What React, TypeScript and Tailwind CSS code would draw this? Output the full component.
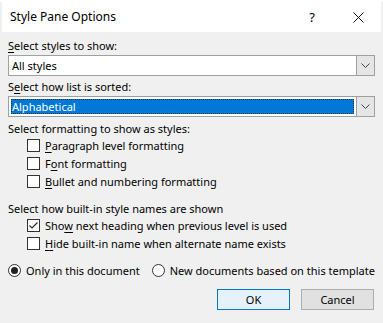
import type { ReactNode } from 'react'

const font = { fontFamily: '"Noto Sans", "Open Sans", Arial, sans-serif' }

function U({ children }: { children: ReactNode }) {
  return <span className="underline underline-offset-2">{children}</span>
}

function Chevron() {
  return (
    <svg width="9" height="5" viewBox="0 0 9 5" fill="none">
      <path d="M0.5 0.5 L4.5 4.5 L8.5 0.5" stroke="#444" strokeWidth="1" />
    </svg>
  )
}

function Check({ checked, children }: { checked?: boolean; children: ReactNode }) {
  return (
    <div className="flex items-center gap-[5px] h-[18px] pl-[19px]">
      <div className="w-[13px] h-[13px] border border-[#333] bg-white flex items-center justify-center">
        {checked && (
          <svg width="11" height="11" viewBox="0 0 11 11" fill="none">
            <path d="M1.5 5.5 L4 8 L9.5 2.5" stroke="#222" strokeWidth="1.1" />
          </svg>
        )}
      </div>
      <span>{children}</span>
    </div>
  )
}

function Radio({ on, children }: { on?: boolean; children: ReactNode }) {
  return (
    <div className="flex items-center gap-[5px]">
      <div className="w-[13px] h-[13px] rounded-full border border-[#333] bg-white flex items-center justify-center">
        {on && <div className="w-[7px] h-[7px] rounded-full bg-[#222]" />}
      </div>
      <span>{children}</span>
    </div>
  )
}

export default function App() {
  return (
    <div className="w-[383px] h-[323px] bg-[#f0f0f0] text-[11px] text-black leading-none whitespace-nowrap" style={font}>
      <div className="mx-[2px] mt-[2px] h-[30px] bg-white flex items-center pl-[8px]">
        <span className="flex-1 text-[12px]">Style Pane Options</span>
        <span className="w-[46px] text-center text-[13px]">?</span>
        <span className="w-[46px] flex justify-center">
          <svg width="11" height="11" viewBox="0 0 11 11">
            <path d="M0.5 0.5 L10.5 10.5 M10.5 0.5 L0.5 10.5" stroke="#111" strokeWidth="1" />
          </svg>
        </span>
      </div>

      <div className="px-[8px] pt-[5px]">
        <div className="h-[16px] flex items-center"><U>S</U>elect styles to show:</div>
        <div className="mt-[2px] h-[21px] border border-[#a0a0a0] bg-white flex">
          <div className="flex-1 flex items-center pl-[3px]">All styles</div>
          <div className="w-[18px] bg-[#e5e5e5] border-l border-[#a0a0a0] flex items-center justify-center">
            <Chevron />
          </div>
        </div>

        <div className="mt-[2px] h-[16px] flex items-center">S<U>e</U>lect how list is sorted:</div>
        <div className="mt-[2px] h-[21px] border border-[#a0a0a0] bg-white flex">
          <div className="flex-1 p-[2px]">
            <div className="h-full bg-[#0078d7] text-white flex items-center pl-[1px] outline outline-1 outline-dotted outline-[#333] -outline-offset-1">
              Alphabetical
            </div>
          </div>
          <div className="w-[18px] bg-[#e5e5e5] border-l border-[#a0a0a0] flex items-center justify-center">
            <Chevron />
          </div>
        </div>

        <div className="mt-[3px] h-[16px] flex items-center">Select formatting to show as styles:</div>
        <Check><U>P</U>aragraph level formatting</Check>
        <Check>F<U>o</U>nt formatting</Check>
        <Check><U>B</U>ullet and numbering formatting</Check>

        <div className="mt-[10px] h-[16px] flex items-center">Select how built-in style names are shown</div>
        <Check checked>Sho<U>w</U> next heading when previous level is used</Check>
        <Check><U>H</U>ide built-in name when alternate name exists</Check>

        <div className="mt-[9px] flex items-center gap-[12px] h-[18px]">
          <Radio on>Only in this document</Radio>
          <Radio>New documents based on this template</Radio>
        </div>

        <div className="mt-[10px] flex justify-end gap-[11px] pr-[1px]">
          <button className="w-[73px] h-[21px] bg-[#e5f1fb] border border-[#0078d7]">OK</button>
          <button className="w-[73px] h-[21px] bg-[#e1e1e1] border border-[#adadad]">Cancel</button>
        </div>
      </div>
    </div>
  )
}
